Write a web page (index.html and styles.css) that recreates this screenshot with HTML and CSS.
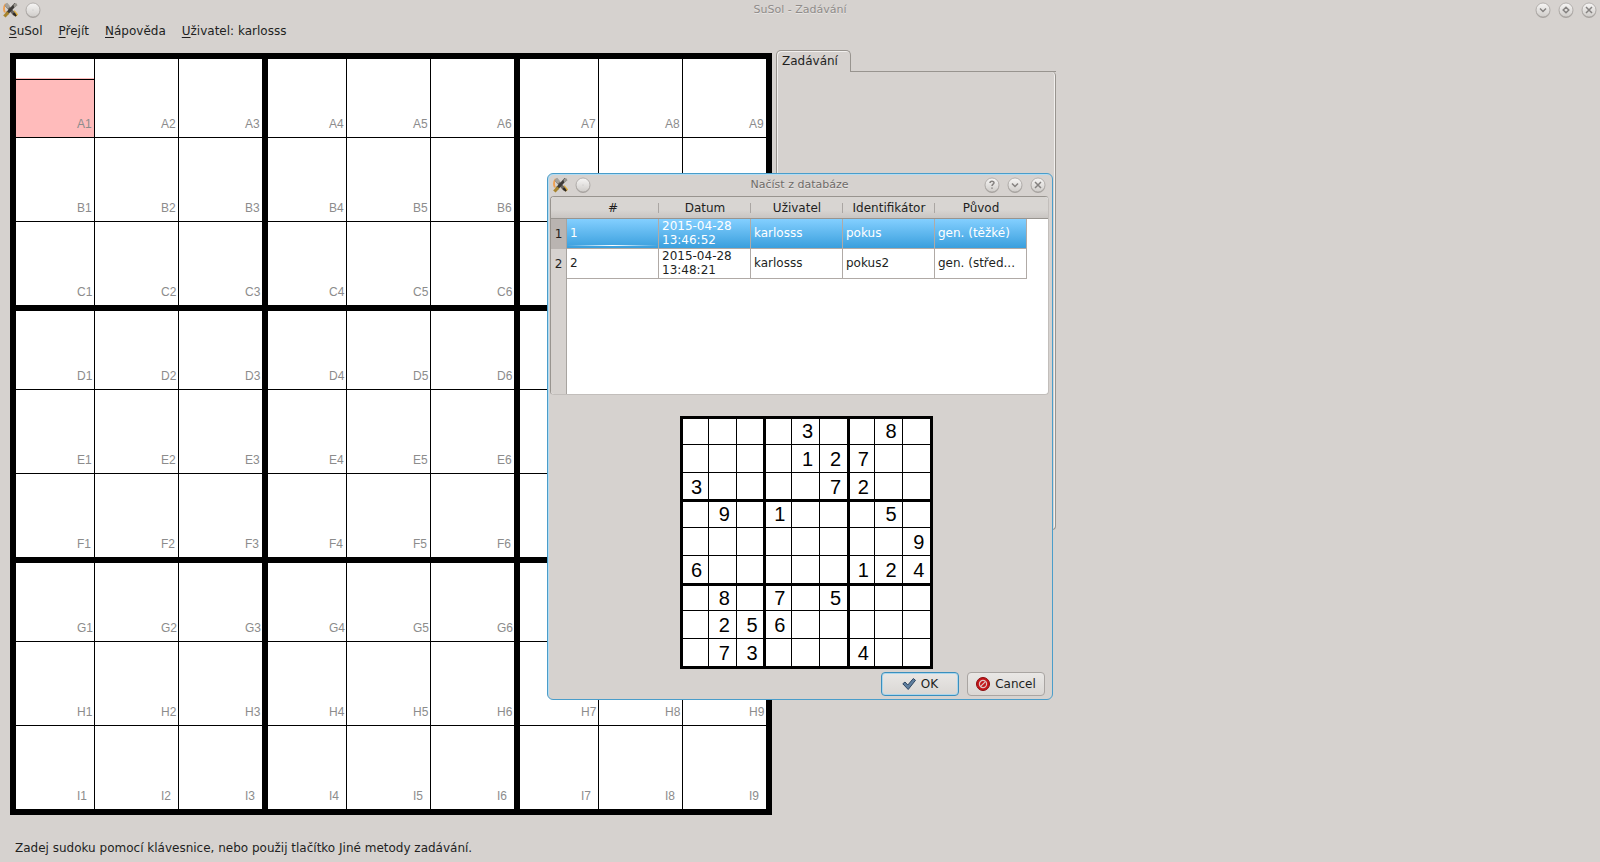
FILE: index.html
```html
<!DOCTYPE html>
<html lang="cs">
<head>
<meta charset="utf-8">
<title>SuSol - Zadávání</title>
<link rel="stylesheet" href="styles.css">
</head>
<body>
<svg class="defs" aria-hidden="true">
  <defs>
    <linearGradient id="knob" x1="0" y1="0" x2="0" y2="1">
      <stop offset="0" stop-color="#f7f6f5"/>
      <stop offset="1" stop-color="#cfccc9"/>
    </linearGradient>
    <symbol id="tools" viewBox="0 0 16 16">
      <path d="M3 1.500C1 4 .6 7.500 2 10.500" fill="none" stroke="#f0a050" stroke-width="2"/>
      <path d="M11 9.500l4 4.500" stroke="#e0b040" stroke-width="3.600"/>
      <path d="M3 2l9.500 11" stroke="#6b6762" stroke-width="3.400"/>
      <path d="M3 1.500l3.500 4" stroke="#a5a29c" stroke-width="3.600"/>
      <path d="M13.500 1.500L4 12" stroke="#3d3a37" stroke-width="3.200"/>
      <path d="M11 2l3-1.500 1.500 2.500-3.500 2.500" fill="#98958f"/>
      <path d="M5.500 10.500l-4 4.500" stroke="#a8842c" stroke-width="3.400"/>
      <path d="M11 11.500l3 3" stroke="#2b2723" stroke-width="2.200"/>
    </symbol>
    <symbol id="disc" viewBox="0 0 16 16">
      <circle cx="8" cy="8.900" r="7.100" fill="#aaa6a2"/>
      <circle cx="8" cy="8" r="7" fill="url(#knob)" stroke="#a09c99" stroke-width=".7"/>
    </symbol>
  </defs>
</svg>

<div class="window">
  <header class="titlebar">
    <div class="title-side">
      <svg class="app-icon"><use href="#tools"/></svg>
      <button class="knob" aria-label="Menu okna"><svg viewBox="0 0 16 16"><use href="#disc"/><circle cx="8" cy="8" r=".5" fill="#bbb"/></svg></button>
    </div>
    <h1 class="title title-inactive">SuSol - Zadávání</h1>
    <div class="title-side title-end">
      <button class="knob" aria-label="Minimalizovat"><svg viewBox="0 0 16 16"><use href="#disc"/><path class="mark" d="M5 6.500l3 3 3-3"/></svg></button>
      <button class="knob" aria-label="Maximalizovat"><svg viewBox="0 0 16 16"><use href="#disc"/><path class="mark" d="M8 5.200l2.800 2.800L8 10.800 5.200 8z"/></svg></button>
      <button class="knob" aria-label="Zavřít"><svg viewBox="0 0 16 16"><use href="#disc"/><path class="mark" d="M5 5l6 6M11 5l-6 6"/></svg></button>
    </div>
  </header>

  <nav class="menubar">
    <button class="menu"><u>S</u>uSol</button>
    <button class="menu"><u>P</u>řejít</button>
    <button class="menu"><u>N</u>ápověda</button>
    <button class="menu"><u>U</u>živatel: karlosss</button>
  </nav>

  <main class="workspace">
    <div class="board" id="board"></div>
    <section class="tabs">
      <div class="tab-row"><button class="tab" role="tab" aria-selected="true">Zadávání</button><span class="tab-line"></span></div>
      <div class="tab-panel" role="tabpanel"></div>
    </section>
  </main>

  <footer class="status">Zadej sudoku pomocí klávesnice, nebo použij tlačítko Jiné metody zadávání.</footer>
</div>

<div class="overlay">
  <div class="dialog" role="dialog" aria-labelledby="dialog-title">
    <header class="titlebar dialog-titlebar">
      <div class="title-side">
        <svg class="app-icon"><use href="#tools"/></svg>
        <button class="knob" aria-label="Menu okna"><svg viewBox="0 0 16 16"><use href="#disc"/><circle cx="8" cy="8" r=".5" fill="#bbb"/></svg></button>
      </div>
      <h2 class="title" id="dialog-title">Načíst z databáze</h2>
      <div class="title-side title-end">
        <button class="knob" aria-label="Nápověda"><svg viewBox="0 0 16 16"><use href="#disc"/><path class="mark" d="M6 6c0-2.400 4-2.400 4-.3C10 7.200 8 7.200 8 9M8 10.600v1.200"/></svg></button>
        <button class="knob" aria-label="Minimalizovat"><svg viewBox="0 0 16 16"><use href="#disc"/><path class="mark" d="M5 6.500l3 3 3-3"/></svg></button>
        <button class="knob" aria-label="Zavřít"><svg viewBox="0 0 16 16"><use href="#disc"/><path class="mark" d="M5 5l6 6M11 5l-6 6"/></svg></button>
      </div>
    </header>

    <div class="list">
      <table class="records">
        <thead>
          <tr><th class="corner"></th><th>#</th><th>Datum</th><th>Uživatel</th><th>Identifikátor</th><th class="last">Původ</th><th class="rest"></th></tr>
        </thead>
        <tbody>
          <tr class="selected"><th>1</th><td class="current">1</td><td>2015-04-28 13:46:52</td><td>karlosss</td><td>pokus</td><td>gen. (těžké)</td><td class="rest"></td></tr>
          <tr><th>2</th><td>2</td><td>2015-04-28 13:48:21</td><td>karlosss</td><td>pokus2</td><td>gen. (střed...</td><td class="rest"></td></tr>
        </tbody>
      </table>
      <div class="gutter"></div>
    </div>

    <div class="preview" id="preview"></div>

    <div class="actions">
      <button class="action action-default">
        <svg viewBox="0 0 14 14"><path d="M.8 6.800L3 5l2.800 3L11.300 1.500l2.200 1.800L6.200 12.500z" fill="#5f7f9f" stroke="#2f4763" stroke-width="1"/></svg>OK
      </button>
      <button class="action">
        <svg viewBox="0 0 14 14"><circle cx="7" cy="7" r="6.500" fill="#c4161a" stroke="#8a0c0e"/><circle cx="7" cy="7" r="3.600" fill="none" stroke="#dcc4c4" stroke-width="1.200"/><path d="M4.600 9.400l4.800-4.800" stroke="#dcc4c4" stroke-width="1.300"/></svg>Cancel
      </button>
    </div>
  </div>
</div>
<script src="boards.js"></script>
</body>
</html>
```
FILE: styles.css
```css
* {
  box-sizing: border-box;
}

body {
  margin: 0;
  background: #d6d2cf;
  color: #221f1e;
  font: 12px/14px "DejaVu Sans", sans-serif;
}

button {
  margin: 0;
  padding: 0;
  border: 0;
  background: none;
  color: inherit;
  font: inherit;
}

.defs {
  position: absolute;
  width: 0;
  height: 0;
}

.window {
  display: flex;
  flex-direction: column;
  min-height: 100vh;
}

.titlebar {
  display: grid;
  grid-template-columns: 1fr auto 1fr;
  align-items: center;
  height: 20px;
  padding: 0 3px;
}

.title-side {
  display: flex;
  align-items: center;
  gap: 7px;
}

.title-end {
  justify-content: flex-end;
}

.app-icon,
.knob,
.knob svg {
  display: block;
  width: 16px;
  height: 16px;
}

.app-icon {
  width: 15px;
}

.mark {
  fill: none;
  stroke: #858280;
  stroke-width: 1.5;
}

.title {
  margin: 0;
  color: #6f6b69;
  font-size: 11px;
  font-weight: normal;
  text-shadow: 0 1px #e8e6e4;
}

.title-inactive {
  color: #8f8b89;
}

.menubar {
  display: flex;
  gap: 16px;
  padding: 3px 9px;
}

.menu {
  line-height: 16px;
}

.menu u {
  text-underline-offset: 2px;
}

.workspace {
  display: flex;
  align-items: flex-start;
  gap: 4px;
  padding: 8px 10px 0;
}

.board {
  display: grid;
  grid-template-columns: repeat(9, 84px);
  grid-auto-rows: 84px;
  border-right: 6px solid #000;
  border-bottom: 6px solid #000;
  background: #fff;
  margin-top: 3px;
}

.cell {
  display: flex;
  flex-direction: column;
  justify-content: flex-end;
  border-left: 1px solid #000;
  border-top: 1px solid #000;
}

.cell.box-left {
  border-left-width: 6px;
}

.cell.box-top {
  border-top-width: 6px;
}

.label {
  width: 17px;
  margin-left: auto;
  padding-bottom: 6px;
  color: #8c8c8c;
  font: 12px/14px "Liberation Sans", sans-serif;
}

.entry {
  width: 100%;
  height: 19px;
  padding: 0;
  border: 0;
  background: #fff;
}

.active {
  display: flex;
  flex: 1;
  align-items: flex-end;
  background: linear-gradient(#fbb 1px, #000 1px, #000 2px, #fbb 2px);
}

.tabs {
  width: 280px;
}

.tab-row {
  display: flex;
}

.tab {
  height: 22px;
  width: 75px;
  padding: 0 5px 2px;
  border: 1px solid #98948f;
  border-bottom: 0;
  border-radius: 5px 5px 0 0;
  box-shadow: inset 1px 1px #f2f0ee;
  text-align: left;
}

.tab-line {
  flex: 1;
  border-bottom: 1px solid #98948f;
}

.tab-panel {
  height: 458px;
  border: 1px solid #98948f;
  border-top: 0;
  border-radius: 0 4px 4px 4px;
  box-shadow: inset 1px 0 #f2f0ee, inset -1px 0 #f2f0ee;
}

.status {
  margin-top: auto;
  padding: 0 15px 7px;
}

.overlay {
  position: absolute;
  inset: 0;
  display: flex;
  justify-content: center;
  align-items: flex-start;
  padding-top: 173px;
}

.dialog {
  width: 506px;
  padding: 0 3px 3px 2px;
  border: 1px solid #4a9dca;
  border-radius: 6px;
  background: #d6d2cf;
  box-shadow: inset 1px 1px #b4dcf2;
}

.dialog-titlebar {
  height: 22px;
}

.list {
  display: flex;
  flex-direction: column;
  height: 199px;
  border: 1px solid #98948f;
  border-right-color: #c2bebb;
  border-bottom-color: #c2bebb;
  border-radius: 4px;
  background: #fff;
  overflow: hidden;
}

.records {
  width: 100%;
  table-layout: fixed;
  border-collapse: separate;
  border-spacing: 0;
}

.records th {
  padding: 0;
  width: 92px;
  background: #d6d2cf;
  font-weight: normal;
}

.records thead th {
  height: 22px;
  border-bottom: 1px solid #98948f;
  background: linear-gradient(#aaa6a3, #aaa6a3) right 0 center / 1px 10px no-repeat, linear-gradient(#d8d5d2 60%, #c9c5c2);
}

.records .corner,
.records tbody th {
  width: 16px;
}

.records thead .corner,
.records thead .last,
.records thead .rest {
  background: linear-gradient(#d8d5d2 60%, #c9c5c2);
}

.records .rest {
  width: auto;
}

.records tbody th {
  border-right: 1px solid #a8a4a0;
}

.records tbody td {
  height: 30px;
  padding: 0 3px 1px;
  border-right: 1px solid #b0aaa6;
  border-bottom: 1px solid #b0aaa6;
}

.records tbody td.rest {
  border: 0;
  background: #fff;
}

.records .selected td {
  background: linear-gradient(#83cfff, #3a9fdd);
  color: #fff;
}

.records .selected .current {
  background: linear-gradient(90deg, #3a9fdd00, #fff, #3a9fdd00) left 0 bottom 2px / 100% 1px no-repeat, linear-gradient(#83cfff, #3a9fdd);
}

.records .selected th {
  background: #b9b4b1;
}

.gutter {
  flex: 1;
  width: 16px;
  border-right: 1px solid #a8a4a0;
  background: #d6d2cf;
}

.preview {
  display: grid;
  grid-template: repeat(9, 1fr) / repeat(9, 1fr);
  width: 253px;
  height: 253px;
  margin: 21px 0 0 130px;
  border-right: 3px solid #000;
  border-bottom: 3px solid #000;
  background: #fff;
}

.digit {
  padding: 4px 0 0 11px;
  background: linear-gradient(#000, #000) 0 0 / 1px 100% no-repeat, linear-gradient(#000, #000) 0 0 / 100% 1px no-repeat;
  color: #000;
  font: 20px/23px "Liberation Sans", sans-serif;
  min-width: 0;
  min-height: 0;
}

.digit.box-left {
  background-size: 3px 100%, 100% 1px;
}

.digit.box-top {
  background-size: 1px 100%, 100% 3px;
}

.digit.box-left.box-top {
  background-size: 3px 100%, 100% 3px;
}

.actions {
  display: flex;
  justify-content: flex-end;
  gap: 8px;
  padding: 3px 4px 0;
}

.action {
  display: flex;
  align-items: center;
  justify-content: center;
  gap: 5px;
  width: 78px;
  height: 24px;
  border: 1px solid #a9a5a2;
  border-radius: 4px;
  background: linear-gradient(#e9e7e5, #dad7d4);
}

.action-default {
  border-color: #3a8fbd;
  box-shadow: inset 0 0 0 1px #a9d5ec;
}

.action svg {
  width: 14px;
  height: 14px;
}
```
FILE: boards.js
```js
const rows = "ABCDEFGHI";
const puzzle = [
  "    3  8 ",
  "    127  ",
  "3    72  ",
  " 9 1   5 ",
  "        9",
  "6     124",
  " 8 7 5   ",
  " 256     ",
  " 73   4  "
];

function makeCell(base, row, col) {
  const cell = document.createElement("div");
  cell.className = base;
  if (col % 3 === 0) cell.classList.add("box-left");
  if (row % 3 === 0) cell.classList.add("box-top");
  return cell;
}

const board = document.getElementById("board");
const preview = document.getElementById("preview");

for (let row = 0; row < 9; row++) {
  for (let col = 0; col < 9; col++) {
    const cell = makeCell("cell", row, col);
    const name = rows[row] + (col + 1);
    const label = `<span class="label">${name}</span>`;
    cell.innerHTML = name === "A1"
      ? `<input class="entry" aria-label="A1"><div class="active">${label}</div>`
      : label;
    board.append(cell);

    const digit = makeCell("digit", row, col);
    digit.textContent = puzzle[row][col].trim();
    preview.append(digit);
  }
}
```
